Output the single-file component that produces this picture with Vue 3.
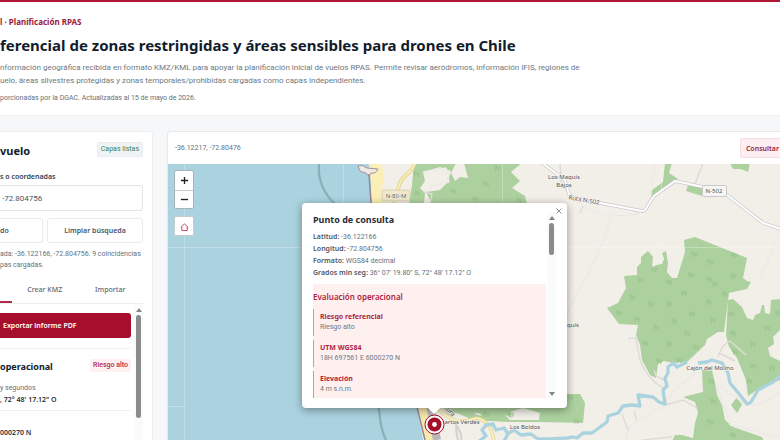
<script setup>
import { ref } from 'vue'

const query = ref('-72.804756')

const details = [
  ['Latitud:', '-36.122166'],
  ['Longitud:', '-72.804756'],
  ['Formato:', 'WGS84 decimal'],
  ['Grados min seg:', '36° 07\' 19.80" S, 72° 48\' 17.12" O'],
]

const evaluation = [
  ['Riesgo referencial', 'Riesgo alto'],
  ['UTM WGS84', '18H 697561 E 6000270 N'],
  ['Elevación', '4 m s.n.m.'],
]

const trees = [
  [694, 254], [710, 262], [734, 255], [691, 275], [709, 279], [733, 276], [654, 269],
  [640, 280], [669, 282], [715, 284], [632, 297], [684, 293], [651, 304], [669, 304], [709, 302],
  [725, 294], [619, 313], [637, 319], [674, 321], [692, 314], [713, 320], [656, 327], [687, 333],
  [645, 343], [669, 344], [696, 347], [659, 361], [679, 360], [731, 314], [733, 333], [753, 344],
  [767, 328], [735, 352], [753, 366], [772, 368], [711, 381], [713, 401], [710, 422], [733, 435],
  [749, 381], [778, 313], [416, 174], [417, 193], [453, 191], [486, 184], [497, 168], [475, 199],
  [519, 200], [486, 414], [511, 414], [570, 397], [576, 421],
]
</script>

<template>
  <div class="page">
    <header class="hero">
      <p class="eyebrow">l · Planificación RPAS</p>
      <h1>ferencial de zonas restringidas y áreas sensibles para drones en Chile</h1>
      <p class="lead">
        nformación geográfica recibida en formato KMZ/KML para apoyar la planificación inicial de vuelos RPAS. Permite revisar aeródromos, información IFIS, regiones de<br>
        uelo, áreas silvestres protegidas y zonas temporales/prohibidas cargadas como capas independientes.
      </p>
      <p class="note">porcionadas por la DGAC. Actualizadas al 15 de mayo de 2026.</p>
    </header>

    <main class="workspace">
      <aside class="sidebar">
        <div class="row head">
          <h2>vuelo</h2>
          <span class="badge ok">Capas listas</span>
        </div>
        <label class="label" for="query">s o coordenadas</label>
        <input id="query" v-model="query" class="field" type="text">
        <div class="actions">
          <button class="btn first" type="button">do</button>
          <button class="btn" type="button">Limpiar búsqueda</button>
        </div>
        <p class="status">ada: -36.122166, -72.804756. 9 coincidencias<br>pas cargadas.</p>
        <nav class="tabs">
          <span class="current"></span>
          <button type="button">Crear KMZ</button>
          <button type="button">Importar</button>
        </nav>
        <div class="scroller">
          <div class="results">
            <button class="export" type="button">Exportar informe PDF</button>
            <div class="row summary">
              <h3>operacional</h3>
              <span class="badge risk">Riesgo alto</span>
            </div>
            <div class="item">
              <span>y segundos</span>
              <strong>, 72° 48' 17.12" O</strong>
            </div>
            <div class="item utm"><strong>000270 N</strong></div>
          </div>
          <div class="bar"><i class="up"></i><i class="thumb"></i></div>
        </div>
      </aside>

      <section class="mapcard">
        <div class="toolbar">
          <span>-36.12217, -72.80476</span>
          <button class="consult" type="button">Consultar</button>
        </div>
        <div class="map">
          <svg class="tiles" viewBox="168 164 612 276" preserveAspectRatio="xMinYMin slice" aria-hidden="true">
            <rect x="168" y="164" width="1400" height="900" fill="#aad3df" />
            <path d="M368 160 L371 178 L372 203 L390 300 L417 407 L425 450 H1568 V160Z" fill="#f2efe9" />
            <path d="M369 160 L371 185 L372 205 L386 205 L380 192 L384 180 L381 160Z" fill="#fbefb6" />
            <path d="M417 405 L426 450 H438 L429 405Z" fill="#f6e9ae" />
            <path d="M358 166 Q362 164 367 168 L378 169 Q376 174 371 173 Q369 178 366 173 Q361 172 360 171Z" fill="#eee9e3" stroke="#a08f9f" stroke-width="1" />
            <path d="M369 174 L371 203 M417 407 L425 440" fill="none" stroke="#93879a" stroke-width="1.5" />
            <path d="M319 164 Q317 188 336 205 M378 406 Q380 412 380 419 Q382 433 387 442" fill="none" stroke="#8dbabf" stroke-width="2.5" />
            <path d="M319 164 Q317 188 336 205 M378 406 Q380 412 380 419 Q382 433 387 442" fill="none" stroke="#79a7ac" stroke-width=".7" />
            <g fill="#add19e">
              <path d="M414 163 H456 L451 173 L455 181 L460 177 L468 178 L464 163 H522 L511 172 L520 181 L512 188 L525 196 L527 204 H432 L426 192 L440 190 L448 182 L451 171 L440 167 L423 172 L425 181 L420 188 L425 193 L424 204 H409 L412 185Z" />
              <path d="M665 163 H672 L669 173 L678 179 L656 195 L650 200 L652 190 L663 182Z" />
              <path d="M688 185 L703 187 L702 196 L686 191Z" />
              <path d="M730 163 H750 L748 172 L741 169 L733 169Z" />
              <path d="M624 276 L637 275 L637 267 L641 263 L641 257 L648 251 L653 257 L652 268 L656 265 L662 264 L664 259 L662 253 L666 251 L668 263 L667 272 L672 278 H677 L685 252 L684 240 L695 237 L747 258 L743 278 L747 281 L751 282 L747 289 L729 293 L724 332 H718 L707 339 L705 345 L687 362 L673 363 L664 361 L658 364 L656 378 L650 375 L642 360 L640 345 L636 335 L638 325 L619 324 L607 308 L618 303 L626 288Z" />
              <path d="M728 300 L733 299 L742 307 L747 318 L753 320 L755 315 L760 313 L762 305 H764 L765 313 L770 314 L771 300 L780 299 V330 L773 337 L774 344 L768 348 L770 356 L780 361 V380 L757 390 L748 396 L746 380 L737 358 L729 347 L726 335Z" />
              <path d="M702 370 H712 L715 383 L717 395 L722 405 L725 420 L733 427 L762 437 L764 441 H672 L675 435 L682 435 L693 438 L695 423 L698 413 L695 402 L683 397 L703 392Z" />
              <path d="M731 405 L737 397 L742 405 L737 413Z" />
              <path d="M442 405 L448 413 H457 L473 420 L507 422 H540 L583 423 L585 403 L580 394 H540Z" />
            </g>
            <path d="M505 415 L512 418 L510 412 L523 408 L540 413 L539 420 H510Z M474 414 Q479 411 482 416Z" fill="#f2efe9" />
            <g fill="none" stroke="#dedbd6" stroke-width="1.4">
              <path d="M560 163 L561 181 L567 190 M583 206 L580 213 M584 206 Q611 221 645 211 M611 215 Q604 245 585 280 Q573 300 566 318 M655 164 L650 200 M703 163 L695 184 M780 228 Q767 265 759 280" />
              <path d="M423 172 L446 168 L449 182 L430 187 M425 192 L432 194 L430 204 M629 340 L630 338 H636 L640 360 Q647 379 663 388 M654 370 L656 376 L664 380 M622 414 L628 430 M634 411 L637 420 M627 440 Q625 430 636 422 L665 405 Q673 388 700 371 M665 405 L683 400 L697 408 M718 357 Q722 344 730 341 L746 355 M719 353 L735 361 M716 385 L724 407 Q729 417 730 425 L780 437 M716 384 L744 403 Q755 411 780 392 M642 440 L672 437" />
            </g>
            <g fill="none" stroke="#faf9f6" stroke-width=".8">
              <path d="M611 215 Q604 245 585 280 Q573 300 566 318 M584 206 Q611 221 645 211 M655 164 L650 200 M780 228 Q767 265 759 280 M423 172 L446 168 L449 182 L430 187 M627 440 Q625 430 636 422 L665 405 Q673 388 700 371 M716 385 L724 407 Q729 417 730 425 L780 437 M716 384 L744 403 Q755 411 780 392" />
              <path d="M443 407 Q464 432 461 440 M457 419 Q455 430 458 440" stroke="#d3d0cc" stroke-width="2" />
            </g>
            <path d="M541 162 L565 180 L569 194 L574 198 L642 211 Q646 211 648 205 L654 196 L675 181 L703 187 L727 195 L763 223 L781 229" fill="none" stroke="#c8c8cc" stroke-width="3.4" stroke-linejoin="round" />
            <path d="M541 162 L565 180 L569 194 L574 198 L642 211 Q646 211 648 205 L654 196 L675 181 L703 187 L727 195 L763 223 L781 229" fill="none" stroke="#fff" stroke-width="2" stroke-linejoin="round" />
            <path d="M415 162 Q415 168 405 176 Q399 181 397 194 L393 204" fill="none" stroke="#d9c786" stroke-width="3.6" />
            <path d="M415 162 Q415 168 405 176 Q399 181 397 194 L393 204" fill="none" stroke="#f8eeb0" stroke-width="2.4" />
            <path d="M430 405 L437 440" fill="none" stroke="#b9b9bb" stroke-width="8" />
            <path d="M437 407 Q449 422 466 421 L476 418 Q491 420 494 441" fill="none" stroke="#ded196" stroke-width="3.4" />
            <path d="M437 407 Q449 422 466 421 L476 418 Q491 420 494 441" fill="none" stroke="#f7efb9" stroke-width="2.2" />
            <path d="M479 441 L486 436 L482 430 L486 425 L493 424 L496 430 L504 428 L508 434 L504 441 M507 434 L514 430 L521 435 L531 434 L538 439 L550 439 L567 438 L573 437 L577 438 L583 433 L592 433 L607 422 L608 416 L618 413 L623 406 L632 405 L640 406 L638 395 L653 397 L659 402 L665 404 L663 390 L667 386 L665 378 L668 373 L668 367 L673 363 L677 367 L687 362 M698 363 L707 362 L712 360 L722 363 L728 373 L730 383 L740 395 L747 404 L751 402 L758 390 L773 382 L781 375" fill="none" stroke="#aad3df" stroke-width="3.3" stroke-linejoin="round" />
            <g fill="none" stroke="#92c086" stroke-width=".7">
              <path v-for="(t, i) in trees" :key="i" :transform="`translate(${t[0]} ${t[1]})`" d="M-2.5 -1 a1.2 1.4 0 1 1 2.4 0 a1.2 1.4 0 1 1 -2.4 0 M-1.3 0 V3 M.6 0 a1.1 1.3 0 1 1 2.2 0 a1.1 1.3 0 1 1 -2.2 0 M1.7 1 V3" />
            </g>
            <path d="M184.500 164 V440 M343.500 164 V203 M502.500 164 V203 M661.500 164 V247 M168 247.500 H302 M567 247.500 H780 M168 406.500 H185" stroke="#fff" stroke-width=".6" opacity=".45" />
            <rect x="382" y="190" width="28" height="11" rx="1" fill="#eee8c9" stroke="#d4cba0" stroke-width=".7" />
            <rect x="702.500" y="185.500" width="24" height="11" rx="1" fill="#f5f5f5" stroke="#c9c9c9" stroke-width="1" />
            <g class="places">
              <text x="396" y="198" fill="#665a38">N-80-M</text>
              <text x="714" y="193" fill="#555">N-502</text>
              <text x="564" y="179">Los Maquis</text>
              <text x="564" y="187">Bajos</text>
              <text x="573" y="327">quis</text>
              <text x="710" y="370">Cajón del Molino</text>
              <text x="462" y="424">artos Verdes</text>
              <text x="525" y="429">Los Boldos</text>
              <text x="584" y="202" transform="rotate(10 584 200)">Ruta N-502</text>
              <text x="450" y="413" transform="rotate(45 450 411)">tura</text>
            </g>
            <g>
              <circle cx="434.500" cy="424.500" r="9.500" fill="#fff" stroke="#a60f2b" stroke-width="1" />
              <circle cx="434.500" cy="424.500" r="7" fill="#a60f2b" />
              <circle cx="434.500" cy="424.500" r="2.400" fill="#fff" />
            </g>
          </svg>

          <div class="controls">
            <div class="zoom">
              <button type="button" aria-label="Acercar"><svg viewBox="0 0 10 10"><path d="M1 5H9M5 1V9" /></svg></button>
              <button type="button" aria-label="Alejar"><svg viewBox="0 0 10 10"><path d="M1 5H9" /></svg></button>
            </div>
            <button class="home" type="button" aria-label="Inicio"><svg viewBox="0 0 10 10"><path d="M1 6 L5 2 L9 6 M2 5.500 V9.500 H8 V5.500" /></svg></button>
          </div>

          <article class="popup">
            <button class="close" type="button" aria-label="Cerrar"><svg viewBox="0 0 6 6"><path d="M.5 .5 L5.500 5.500 M5.500 .5 L.5 5.500" /></svg></button>
            <div class="popbody">
              <h3>Punto de consulta</h3>
              <p v-for="d in details" :key="d[0]"><strong>{{ d[0] }}</strong> {{ d[1] }}</p>
              <div class="evaluation">
                <h4>Evaluación operacional</h4>
                <div v-for="e in evaluation" :key="e[0]" class="entry">
                  <strong>{{ e[0] }}</strong>
                  <span>{{ e[1] }}</span>
                </div>
              </div>
            </div>
            <div class="bar popbar"><i class="up"></i><i class="thumb"></i><i class="down"></i></div>
          </article>
        </div>
      </section>
    </main>
  </div>
</template>

<style>
body { margin: 0; background: #f5f7f9; overflow: hidden; }
</style>

<style scoped>
* { box-sizing: border-box; }
.page {
  height: 100vh;
  display: flex;
  flex-direction: column;
  font-family: Roboto, "Noto Sans", sans-serif;
  font-size: 7px;
  color: #64717d;
  overflow: hidden;
}
h1, h2, h3, h4, p { margin: 0; }
button, input { font: inherit; }
button { padding: 0; cursor: pointer; white-space: nowrap; }
h1, h2, h3, h4, strong, button, .eyebrow, .label, .places { font-family: "Noto Sans", "Open Sans", sans-serif; }
.hero {
  flex: none;
  background: #fff;
  border-top: 2px solid #b01735;
  border-bottom: 1px solid #eef0f2;
  padding: 14px 0 12px;
  white-space: nowrap;
}
.eyebrow { font-size: 8px; line-height: 12px; font-weight: 700; color: #98203a; }
h1 { margin-top: 7px; font-size: 15px; line-height: 20px; font-weight: 700; color: #111c2c; }
.lead { margin-top: 6px; font-size: 8px; line-height: 13px; color: #6d7882; }
.note { margin-top: 6px; font-size: 7px; line-height: 10px; }
.workspace { flex: 1; min-height: 0; display: flex; gap: 14px; padding-top: 15px; }
.sidebar {
  flex: none;
  width: 153px;
  display: flex;
  flex-direction: column;
  background: #fff;
  border: 1px solid #eceff2;
  border-width: 1px 1px 0 0;
  border-radius: 0 4px 0 0;
  padding: 10px 9px 0 0;
}
.row { display: flex; align-items: center; justify-content: space-between; }
.head { align-items: flex-start; height: 28px; }
h2 { font-size: 11px; line-height: 18px; font-weight: 700; color: #111c2c; }
.badge { font-size: 7px; line-height: 13px; border-radius: 2px; padding: 0 3px; }
.ok { background: #eff3f4; color: #3f805a; border: 1px solid #e8edef; }
.risk { background: #fff0f1; color: #b52a4b; font-weight: 500; }
.label { line-height: 13px; margin-bottom: 2px; font-weight: 600; color: #36414e; }
.field {
  width: 100%;
  height: 26px;
  border: 1px solid #e2e5e8;
  border-left: 0;
  border-radius: 0 3px 3px 0;
  padding: 0 2px;
  font-size: 8px;
  color: #4b5561;
  background: #fff;
}
.actions { display: grid; grid-template-columns: 43px 1fr; gap: 4px; margin-top: 7px; }
.btn {
  height: 25px;
  background: #fff;
  border: 1px solid #e8ebee;
  border-radius: 3px;
  font-weight: 600;
  color: #4a5663;
}
.first { border-left: 0; border-radius: 0 3px 3px 0; text-align: left; }
.status { margin-top: 6px; line-height: 11px; white-space: nowrap; }
.tabs {
  display: grid;
  grid-template-columns: 12px 1fr 1fr;
  height: 33px;
  border-bottom: 1px solid #eceff1;
}
.tabs button { border: 0; background: none; padding-top: 4px; color: #5c6975; font-weight: 500; }
.current { border-bottom: 2px solid #b52a4b; }
.scroller { flex: 1; min-height: 0; display: flex; justify-content: space-between; overflow: hidden; }
.results { width: 131px; padding-top: 9px; }
.export {
  width: 100%;
  height: 25px;
  border: 0;
  border-radius: 0 3px 3px 0;
  background: #a60f2b;
  color: #fff;
  font-weight: 600;
  text-align: left;
  padding-left: 3px;
}
.summary { margin-top: 10px; padding-top: 10px; border-top: 1px solid #eef0f2; height: 34px; align-items: flex-start; }
h3 { font-size: 9px; line-height: 15px; font-weight: 700; color: #111c2c; }
.item { display: flex; flex-direction: column; line-height: 12px; padding-bottom: 4px; border-bottom: 1px solid #eef0f2; }
.item strong { font-weight: 600; color: #25303d; }
.utm { padding-top: 16px; border: 0; }
.bar { width: 9px; display: flex; flex-direction: column; align-items: center; background: #fafcfc; }
.bar i { flex: none; }
.up { margin: 4px 0 3px; border: 3px solid transparent; border-top: 0; border-bottom: 4px solid #858585; }
.down { margin-top: auto; border: 3px solid transparent; border-bottom: 0; border-top: 4px solid #858585; }
.thumb { width: 5px; height: 103px; border-radius: 3px; background: #8b8b8b; }
.mapcard {
  flex: 1;
  min-width: 0;
  display: flex;
  flex-direction: column;
  background: #fff;
  border: 1px solid #e5e9ec;
  border-width: 1px 0 0 1px;
  border-radius: 4px 0 0 0;
}
.toolbar { flex: none; height: 32px; display: flex; align-items: center; justify-content: space-between; padding-left: 7px; }
.consult {
  height: 20px;
  padding: 0 1px 0 5px;
  color: #98203a;
  font-weight: 600;
  background: #ffeef1;
  border: 1px solid #f3dfe3;
  border-right: 0;
  border-radius: 3px 0 0 3px;
}
.map { flex: 1; min-height: 0; position: relative; overflow: hidden; }
.tiles { display: block; width: 100%; height: 100%; }
.places { font-size: 6px; fill: #4f4f55; text-anchor: middle; paint-order: stroke; stroke: #f7f5f0; stroke-width: 1px; }
.controls { position: absolute; left: 6px; top: 6px; display: grid; gap: 7px; }
.zoom, .home { width: 20px; border: 1px solid #a5b4ba; border-radius: 2px; background: #fff; }
.zoom { height: 39px; display: grid; grid-template-rows: 1fr 1fr; }
.zoom button { border: 0; background: none; display: grid; place-items: center; }
.zoom button + button { border-top: 1px solid #ccc; }
.controls svg { width: 9px; height: 9px; fill: none; stroke: #222; stroke-width: 1.5; }
.home { height: 20px; display: grid; place-items: center; border-color: #c5cdd1; }
.home svg { stroke: #c23a55; stroke-width: 1; }
.popup {
  position: absolute;
  left: 134px;
  top: 39px;
  width: 265px;
  height: 205px;
  display: flex;
  gap: 1px;
  padding: 9px 11px;
  background: #fff;
  border-radius: 4px;
  box-shadow: 0 2px 8px rgba(0, 0, 0, .4);
}
.popup::after {
  content: "";
  position: absolute;
  left: 126px;
  top: 100%;
  border: 6px solid transparent;
  border-top: 6px solid #fff;
  border-bottom: 0;
}
.close { position: absolute; right: 5px; top: 5px; width: 6px; height: 6px; border: 0; background: none; display: grid; }
.close svg { width: 6px; height: 6px; fill: none; stroke: #777; stroke-width: .8; }
.popbody { flex: 1; line-height: 12px; overflow: hidden; }
.popbody h3 { margin-bottom: 4px; color: #282c35; }
.popbody p strong { font-weight: 600; color: #4c5866; }
.evaluation { margin-top: 5px; padding-top: 7px; background: #fff0f0; color: #6d7882; }
h4 { font-size: 8px; line-height: 12px; font-weight: 600; color: #b01d42; }
.entry { display: flex; flex-direction: column; margin-top: 6px; padding: 2px 0 3px 6px; border-left: 1px solid #a7a9ae; line-height: 11px; }
.entry + .entry { margin-top: 4px; }
.entry strong { color: #b01d42; }
.popbar .thumb { height: 32px; }
.popbar .down { margin-bottom: 3px; }
</style>
